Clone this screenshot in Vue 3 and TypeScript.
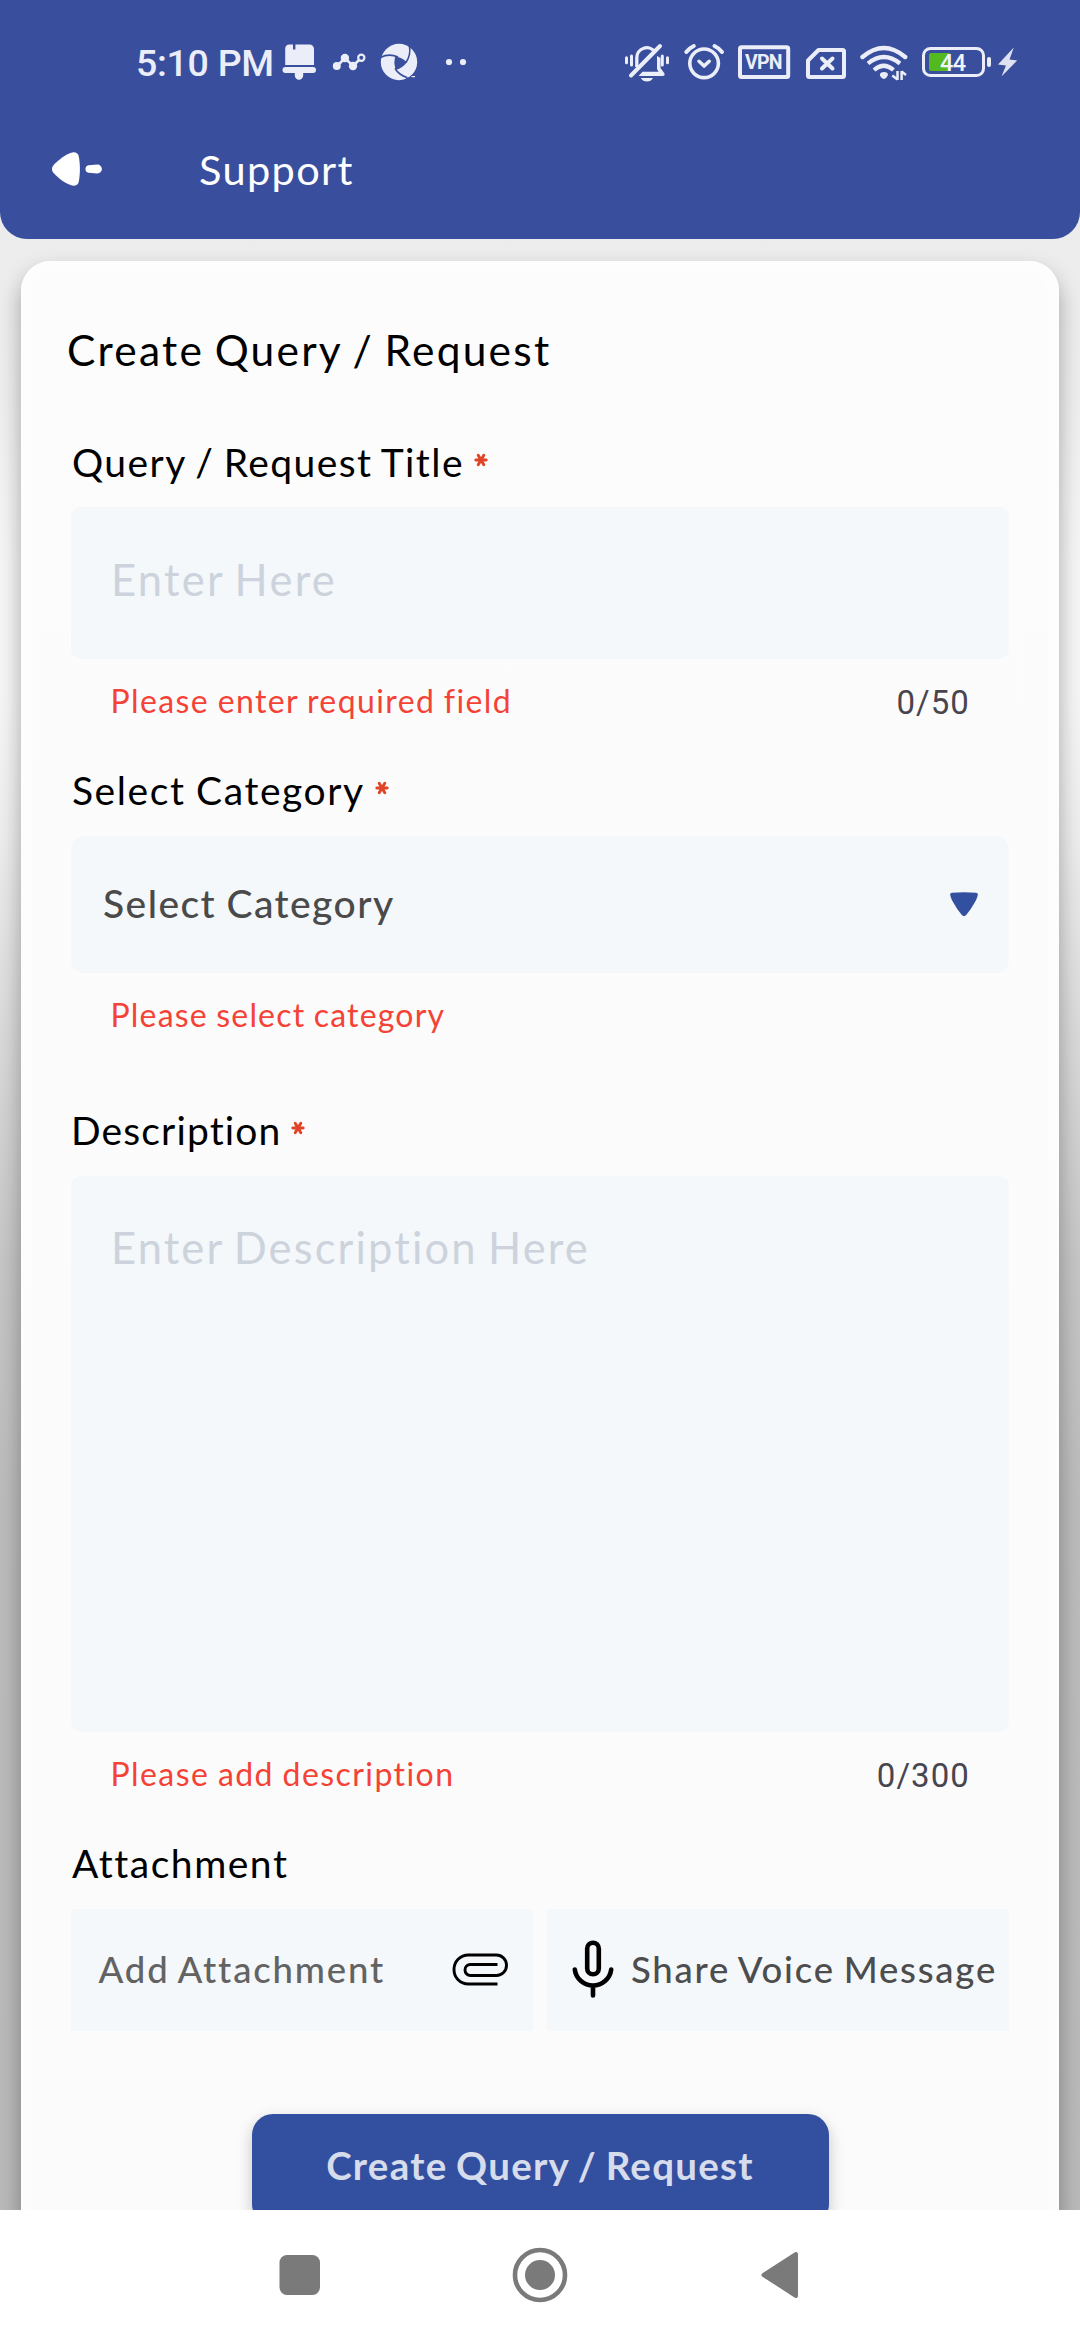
<script setup lang="ts">
import { ref } from 'vue'

const title = ref('')
const description = ref('')
const titleLimit = 50
const descriptionLimit = 300
</script>

<template>
  <div class="screen">
    <header class="header">
      <div class="status">
        <span class="clock">5:10 PM</span>
        <svg class="brush" width="36" height="44" viewBox="281 40 36 44" fill="#ebeef8">
          <path d="M289.5 44.5H293V49.5H295.4V44.5H309.5A4.5 4.5 0 0 1 314 49V65H285.2V49A4.5 4.5 0 0 1 289.5 44.5Z" />
          <path d="M285.5 67H313A3 3 0 0 1 313 73H303.2V75.5A4.2 4.2 0 0 1 294.8 75.5V73H285.5A3 3 0 0 1 285.5 67Z" />
        </svg>
        <svg class="graph" width="36" height="44" viewBox="331 40 36 44">
          <g fill="#ebeef8">
            <circle cx="336.8" cy="66" r="4" /><circle cx="344.9" cy="58" r="4.2" /><circle cx="353" cy="66" r="4.2" />
          </g>
          <path d="M337 66L345 58L353 66L359 60" fill="none" stroke="#ebeef8" stroke-width="2.6" />
          <circle cx="361.3" cy="57.8" r="3.1" fill="#394f9e" stroke="#ebeef8" stroke-width="2.2" />
        </svg>
        <svg class="swirl" width="38" height="44" viewBox="380 40 38 44">
          <circle cx="399" cy="62" r="18.2" fill="#ebeef8" />
          <path d="M395 57Q401 56.5 406.5 62Q402 67.5 395.3 69Q393.5 63 395 57Z" fill="#394f9e" />
          <g fill="none" stroke="#394f9e" stroke-width="1.6">
            <path d="M380.5 57.5Q389 53 398 57" />
            <path d="M409.5 46Q411 55 406 62.5" />
            <path d="M395 68.5Q399 75 407.5 77.8" />
            <path d="M406 62Q401.5 68 395.5 69" />
          </g>
          <path d="M405.5 78.5Q411 77.5 415 72L418 76L412 82Z" fill="#394f9e" />
          <path d="M411.5 76.6H415" stroke="#ebeef8" stroke-width="1.2" />
        </svg>
        <svg class="dots" width="22" height="44" viewBox="445 40 22 44" fill="#ebeef8">
          <circle cx="449" cy="62" r="3.1" /><circle cx="463" cy="62" r="3.1" />
        </svg>

        <svg class="silent" width="46" height="44" viewBox="624 40 46 44" fill="none" stroke="#ebeef8" stroke-width="3.3">
          <path d="M636.8 67V58A10 10 0 0 1 655 52" />
          <path d="M631 75.5L660 46" stroke-width="4" stroke-linecap="round" />
          <path d="M657 56L660.5 58V68L664.5 73.5Q665 76 662.5 76H638.5L642.5 71.8H658.5L657 69Z" fill="#ebeef8" stroke="none" />
          <path d="M640.8 78H653Q651 81.6 647 81.6Q642.8 81.6 640.8 78Z" fill="#ebeef8" stroke="none" />
          <path d="M626.5 57.8V62.8M631.5 56V65M662.3 56V65M667.5 57.8V62.8" stroke-width="3" stroke-linecap="round" />
        </svg>
        <svg class="alarm" width="42" height="44" viewBox="682.5 40 42 44" fill="none" stroke="#ebeef8" stroke-width="3.6" stroke-linecap="round">
          <circle cx="703.6" cy="63.3" r="14.3" />
          <path d="M698.5 61.3L703.6 66L708.7 61.3" stroke-linejoin="round" />
          <path d="M685.8 52Q689 48 693.3 46M721.5 52Q718.3 48 714 46" stroke-width="4" />
        </svg>
        <svg class="vpn" width="54" height="44" viewBox="737 40 54 44">
          <rect x="740" y="47.3" width="48.2" height="29.7" rx="1.5" fill="none" stroke="#ebeef8" stroke-width="4" />
          <text x="745" y="69" font-family="Roboto, sans-serif" font-weight="700" font-size="19.5" fill="#ebeef8" textLength="37.5">VPN</text>
        </svg>
        <svg class="sim" width="42" height="44" viewBox="805 40 42 44" fill="none" stroke="#ebeef8">
          <path d="M808 60.5L818.5 50H842.5Q844 50 844 51.5V75.5Q844 77 842.5 77H809.5Q808 77 808 75.5Z" stroke-width="4" stroke-linejoin="round" />
          <path d="M822 58.5L832.5 68.5M832.5 58.5L822 68.5" stroke-width="4" stroke-linecap="round" />
        </svg>
        <svg class="wifi" width="48" height="44" viewBox="860 40 48 44" fill="none" stroke="#ebeef8" stroke-width="4.2">
          <path d="M862.5 57Q883.8 39 905.2 57" stroke-linecap="round" stroke-width="4.4" />
          <path d="M868 63.5Q883.8 50.5 900 63.5" />
          <path d="M874 70Q883.8 61.5 893.5 70" />
          <path d="M884 72Q888 72.2 888 75Q886.5 78.6 884 79Q881 78.6 879.8 75Q880 72.2 884 72Z" fill="#ebeef8" stroke="none" />
          <path d="M897.5 71V80M892.3 75.5L897.5 79.5M901.6 80V71M906 75L901.6 71.5" stroke-width="2.5" />
        </svg>
        <svg class="battery" width="72" height="44" viewBox="921 40 72 44">
          <rect x="923.5" y="48.5" width="60" height="27" rx="7" fill="none" stroke="#ebeef8" stroke-width="3" />
          <rect x="929" y="53" width="21.5" height="18" rx="2" fill="#54b820" />
          <rect x="987" y="57" width="4" height="10" rx="2" fill="#ebeef8" />
          <text x="940" y="71" font-family="Roboto, sans-serif" font-weight="500" font-size="23.5" fill="#f1f4fb" textLength="26">44</text>
        </svg>
        <svg class="bolt" width="22" height="44" viewBox="997 40 22 44" fill="#dfe3f1">
          <path d="M1013.8 47.5L998 64.5L1006 65.5L1001.5 76.5L1017.2 60.5L1009.5 59.5Z" />
        </svg>
      </div>
      <div class="appbar">
        <svg class="back" width="54" height="40" viewBox="50 149.5 54 40" fill="#fff">
          <path d="M52 169.5C52 167 53.5 165.5 55 164C60 159 65 155.5 70.5 153.4C74.5 152 77.8 153 78.7 156.5C80.3 164 80.3 175 78.7 182.5C77.8 186 74.5 187 70.5 185.6C65 183.5 60 180 55 175C53.5 173.5 52 172 52 169.5Z" />
          <path d="M88.5 165.7L97.5 165.1A4.3 4.3 0 0 1 97.5 173.9L88.5 173.3A3.9 3.9 0 0 1 88.5 165.7Z" />
        </svg>
        <h1>Support</h1>
      </div>
    </header>

    <main class="body">
      <section class="card">
        <h2>Create Query / Request</h2>

        <label class="label first">Query / Request Title <svg class="star" width="14" height="14" viewBox="0 0 14 14"><path d="M7 7H1.8M7 7H12.2M7 7L4.2 2.3M7 7L9.8 2.3M7 7L4.2 11.7M7 7L9.8 11.7" /></svg></label>
        <div class="field short"><span class="placeholder p1">Enter Here</span></div>
        <div class="helper">
          <span class="error e1">Please enter required field</span>
          <span class="count">{{ title.length }}/{{ titleLimit }}</span>
        </div>

        <label class="label category">Select Category <svg class="star" width="14" height="14" viewBox="0 0 14 14"><path d="M7 7H1.8M7 7H12.2M7 7L4.2 2.3M7 7L9.8 2.3M7 7L4.2 11.7M7 7L9.8 11.7" /></svg></label>
        <div class="field select">
          <span class="value">Select Category</span>
          <svg width="30" height="27" viewBox="0 0 30 27" fill="#334f9f">
            <path d="M1.2 3.2Q1.2 2 3 1.7Q15 .7 27 1.7Q28.8 2 28.8 3.2Q28.8 6 26 11Q22.5 17.5 17.2 24Q15 26.3 12.8 24Q7.5 17.5 4 11Q1.2 6 1.2 3.2Z" />
          </svg>
        </div>
        <div class="helper"><span class="error e2">Please select category</span></div>

        <label class="label description">Description <svg class="star" width="14" height="14" viewBox="0 0 14 14"><path d="M7 7H1.8M7 7H12.2M7 7L4.2 2.3M7 7L9.8 2.3M7 7L4.2 11.7M7 7L9.8 11.7" /></svg></label>
        <div class="field area"><span class="placeholder p2">Enter Description Here</span></div>
        <div class="helper">
          <span class="error e3">Please add description</span>
          <span class="count">{{ description.length }}/{{ descriptionLimit }}</span>
        </div>

        <label class="label attachment">Attachment</label>
        <div class="attachments">
          <div class="tile">
            <span class="add">Add Attachment</span>
            <svg class="clip" width="56" height="34" viewBox="0 0 56 34" fill="none" stroke="#000" stroke-width="2.9">
              <path d="M45.5 31H16.5C8 31 2 24.5 2 16.5S8 2 16.5 2H44.5C50 2 54.5 6.5 54.5 12.3S50 22.5 44.5 22.5H18.5C15.3 22.5 13 20 13 17S15.3 11.5 18.5 11.5H45.5" />
            </svg>
          </div>
          <div class="tile voice">
            <svg class="mic" width="42" height="58" viewBox="0 0 42 58" fill="none" stroke="#000" stroke-width="4.6" stroke-linecap="round">
              <rect x="15.2" y="2.8" width="11.6" height="31.5" rx="5.8" />
              <path d="M2.8 29.5C4 39 12 45.5 21 45.5S38 39 39.2 29.5M21 45.5V55.5" />
            </svg>
            <span class="share">Share Voice Message</span>
          </div>
        </div>

        <button class="submit" type="button">Create Query / Request</button>
      </section>
    </main>

    <nav class="navbar">
      <svg width="42" height="60" viewBox="0 0 42 60"><rect x="0.5" y="10" width="40.5" height="40" rx="7.5" fill="#7a7a7a" /></svg>
      <svg width="60" height="60" viewBox="0 0 60 60">
        <circle cx="30" cy="30" r="25" fill="none" stroke="#7a7a7a" stroke-width="4.6" />
        <circle cx="30" cy="30" r="15" fill="#7a7a7a" />
      </svg>
      <svg width="40" height="60" viewBox="0 0 40 60"><path d="M3.5 30L36 9V51Z" fill="#7a7a7a" stroke="#7a7a7a" stroke-width="4" stroke-linejoin="round" /></svg>
    </nav>
  </div>
</template>

<style>
body {
  background: #fff;
}
</style>

<style scoped>
.screen {
  width: 1080px;
  height: 2340px;
  display: flex;
  flex-direction: column;
  overflow: hidden;
  font-family: Lato, sans-serif;
  color: #000;
  background: linear-gradient(#ececec 239px, #efefef 400px, #f6f6f6 560px, #f6f6f6 700px, #eeeeee 830px, #dadada 1030px, #c6c6c6 1260px, #bcbcbc 1500px, #bababa 2210px);
}
.screen span,
.screen h1,
.screen h2 {
  white-space: nowrap;
}
.header {
  flex: none;
  box-sizing: border-box;
  height: 239px;
  border-radius: 0 0 27px 27px;
  background: #394f9e;
}
.status {
  display: flex;
  height: 84px;
  padding-top: 40px;
  box-sizing: border-box;
}
.clock {
  margin-left: 136px;
  width: 145px;
  line-height: 46px;
  font-family: Roboto, sans-serif;
  font-weight: 500;
  font-size: 37.5px;
  letter-spacing: -0.3px;
  color: #ebeef8;
}
.status svg { flex: none; }
.graph { margin-left: 14px; }
.swirl { margin-left: 13px; }
.dots { margin-left: 27px; }
.silent { margin-left: 157px; }
.alarm { margin-left: 12.5px; }
.vpn { margin-left: 12.5px; }
.sim { margin-left: 14px; }
.wifi { margin-left: 13px; }
.battery { margin-left: 13px; }
.bolt { margin-left: 4px; }

.appbar {
  display: flex;
  align-items: center;
  height: 60px;
  margin-top: 55px;
  padding-left: 50px;
  color: #fff;
}
.appbar h1 {
  margin: 0 0 0 95px;
  font-weight: 400;
  font-size: 41.5px;
  line-height: 60px;
  letter-spacing: 1.35px;
}

.body {
  flex: 1;
  min-height: 0;
  padding: 22px 21px 0;
  overflow: hidden;
}
.card {
  height: 2100px;
  box-sizing: border-box;
  padding: 59px 50px 0;
  border-radius: 30px;
  background: linear-gradient(#fcfcfc, #fbfbfb);
  box-shadow: 0 12px 22px rgba(0, 0, 0, 0.32), inset 0 0 14px 6px #fefefe;
}
.card h2 {
  margin: 0 0 57px -4px;
  font-weight: 400;
  font-size: 42.5px;
  line-height: 60px;
  letter-spacing: 2.22px;
  word-spacing: -2.5px;
}
.label {
  display: block;
  margin-bottom: 20px;
  padding-left: 1px;
  font-size: 39px;
  line-height: 51px;
  height: 50px;
  word-spacing: -1px;
}
.label.first { letter-spacing: 1.43px; word-spacing: -2px; }
.label.category { margin-top: 45px; margin-bottom: 21px; letter-spacing: 1.58px; }
.label.description { margin-top: 72px; line-height: 49px; letter-spacing: 1.15px; padding-left: 0; }
.label.attachment { margin-top: 46px; line-height: 48px; letter-spacing: 1.53px; }
.star {
  margin-left: 1px;
  vertical-align: 10px;
  fill: none;
  stroke: #e04325;
  stroke-width: 2.9;
  stroke-linecap: round;
}
.description .star { margin-left: -1px; }
.field {
  box-sizing: border-box;
  border-radius: 10px;
  background: #f4f8fb;
}
.placeholder {
  display: block;
  font-size: 43.5px;
  line-height: 60px;
  color: #cdd3dc;
  word-spacing: -3px;
}
.p1 { letter-spacing: 2.27px; }
.p2 { letter-spacing: 2.12px; }
.short { height: 152px; padding: 42px 40px 0; }
.area { height: 556px; padding: 41px 40px 0; }
.select {
  display: flex;
  align-items: center;
  justify-content: space-between;
  height: 137px;
  padding: 0 30.5px 0 32px;
  border-radius: 13px;
}
.value {
  padding-bottom: 4px;
  font-weight: 500;
  font-size: 39px;
  line-height: 50px;
  letter-spacing: 1.44px;
  word-spacing: -1px;
  color: #4a4a4a;
}
.helper {
  display: flex;
  justify-content: space-between;
  height: 40px;
  margin-top: 21px;
  padding: 0 39px 0 39.5px;
  line-height: 40px;
}
.error {
  padding-top: 1px;
  font-size: 32px;
  color: #f44336;
  word-spacing: -1px;
}
.e1 { letter-spacing: 1.39px; }
.e2 { letter-spacing: 1.19px; }
.e3 { letter-spacing: 1.43px; }
.count {
  padding-top: 3px;
  font-family: Roboto, sans-serif;
  font-size: 33px;
  letter-spacing: 1.08px;
  color: #49454f;
}
.attachments {
  display: grid;
  grid-template-columns: 462px 462px;
  justify-content: space-between;
}
.tile {
  display: flex;
  align-items: center;
  justify-content: space-between;
  box-sizing: border-box;
  height: 122px;
  padding: 0 25px 0 27.5px;
  background: #f4f8fb;
}
.voice { padding: 0 12px 0 25px; }
.mic { margin-bottom: 2px; }
.add,
.share {
  font-weight: 500;
  font-size: 36.5px;
  line-height: 50px;
  padding-bottom: 3px;
  word-spacing: -2px;
}
.add { letter-spacing: 1.85px; color: #636363; }
.share { letter-spacing: 1.77px; color: #4d4d4d; }
.submit {
  display: block;
  width: 577px;
  height: 111px;
  margin: 83px auto 0;
  padding: 0 0 9px;
  border: 0;
  border-radius: 21px;
  background: #334f9f;
  box-shadow: 0 6px 16px rgba(0, 0, 0, 0.22);
  font-family: Lato, sans-serif;
  font-weight: 700;
  font-size: 38.5px;
  letter-spacing: 1.26px;
  word-spacing: -2px;
  color: #d6dcec;
}
.navbar {
  flex: none;
  display: flex;
  align-items: center;
  height: 130px;
  box-sizing: border-box;
  padding-left: 279px;
  gap: 188.5px;
  background: #fff;
}
.navbar svg:nth-child(3) { margin-left: 1.5px; }
</style>
